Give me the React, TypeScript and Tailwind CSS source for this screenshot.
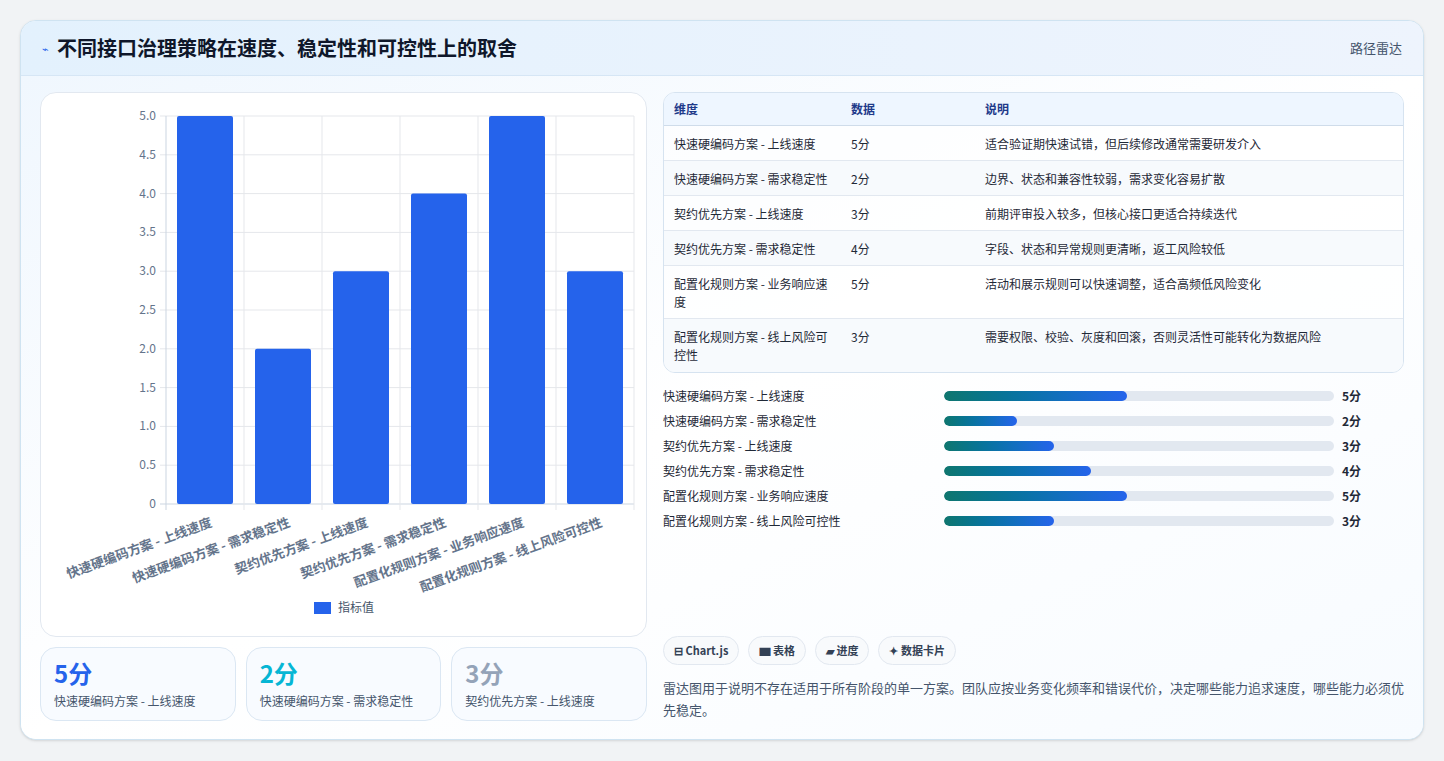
const font = { fontFamily: '"Noto Sans CJK SC", "Noto Sans", sans-serif' };
const cats = [
  ["快速硬编码方案 - 上线速度", 5],
  ["快速硬编码方案 - 需求稳定性", 2],
  ["契约优先方案 - 上线速度", 3],
  ["契约优先方案 - 需求稳定性", 4],
  ["配置化规则方案 - 业务响应速度", 5],
  ["配置化规则方案 - 线上风险可控性", 3],
] as const;
const rows = [
  ["快速硬编码方案 - 上线速度", "5分", "适合验证期快速试错，但后续修改通常需要研发介入", 35],
  ["快速硬编码方案 - 需求稳定性", "2分", "边界、状态和兼容性较弱，需求变化容易扩散", 35],
  ["契约优先方案 - 上线速度", "3分", "前期评审投入较多，但核心接口更适合持续迭代", 35],
  ["契约优先方案 - 需求稳定性", "4分", "字段、状态和异常规则更清晰，返工风险较低", 35],
  ["配置化规则方案 - 业务响应速度", "5分", "活动和展示规则可以快速调整，适合高频低风险变化", 53],
  ["配置化规则方案 - 线上风险可控性", "3分", "需要权限、校验、灰度和回滚，否则灵活性可能转化为数据风险", 53],
] as const;

function Chart() {
  const x0 = 125, x1 = 593, y0 = 23, y1 = 411;
  const cw = (x1 - x0) / 6;
  const ys = [0, 0.5, 1, 1.5, 2, 2.5, 3, 3.5, 4, 4.5, 5];
  const yOf = (v: number) => y1 - (v / 5) * (y1 - y0);
  return (
    <svg width="596" height="544" style={font}>
      {ys.map((v) => (
        <g key={v}>
          <line x1={x0 - 6} x2={x1} y1={yOf(v)} y2={yOf(v)} stroke={v === 0 ? "#cbd5e1" : "#e5e7eb"} />
          <text x={x0 - 10} y={yOf(v) + 4} textAnchor="end" fontSize="12" fill="#64748b">{v === 0 ? "0" : v.toFixed(1)}</text>
        </g>
      ))}
      {Array.from({ length: 7 }).map((_, i) => (
        <line key={i} x1={x0 + i * cw} x2={x0 + i * cw} y1={y0} y2={y1 + 6} stroke={i === 0 ? "#cbd5e1" : "#e5e7eb"} />
      ))}
      {cats.map(([l, v], i) => {
        const cx = x0 + i * cw + cw / 2;
        return (
          <g key={i}>
            <rect x={cx - 28} y={yOf(v)} width="56" height={y1 - yOf(v)} fill="#2563eb" rx="2" />
            <text transform={`translate(${cx + 8},${y1 + 22}) rotate(-20)`} textAnchor="end" fontSize="13" fontWeight="600" fill="#64748b">{l}</text>
          </g>
        );
      })}
      <rect x="273" y="509" width="17" height="12" fill="#2563eb" />
      <text x="297" y="519" fontSize="12" fill="#475569">指标值</text>
    </svg>
  );
}

export default function App() {
  return (
    <div className="min-h-[761px] bg-[#f1f3f5] pt-5 px-5 pb-[21px]" style={font}>
      <div className="rounded-2xl border border-[#cfe3f1] bg-white overflow-hidden shadow-sm">
        <div className="h-[55px] flex items-center justify-between px-[21px] border-b border-[#d6e6f5] bg-gradient-to-r from-[#e3f1fd] to-[#eef4fd]">
          <div className="flex items-center gap-2">
            <span className="text-[#2563eb] text-[11px]">⌁</span>
            <h1 className="text-[20px] font-bold text-[#0f172a]">不同接口治理策略在速度、稳定性和可控性上的取舍</h1>
          </div>
          <span className="text-[13px] text-slate-600">路径雷达</span>
        </div>
        <div className="flex gap-4 px-[19px] pt-[16px] pb-[18px] bg-gradient-to-br from-[#f0f7fe] via-white to-[#f7fbff]">
          <div className="w-[607px] flex flex-col gap-[10px]">
            <div className="h-[545px] rounded-2xl border border-[#e2e8f0] bg-white"><Chart /></div>
            <div className="grid grid-cols-3 gap-[10px]">
              {[["5分", "text-[#2563eb]", "快速硬编码方案 - 上线速度"], ["2分", "text-[#06b6d4]", "快速硬编码方案 - 需求稳定性"], ["3分", "text-[#94a3b8]", "契约优先方案 - 上线速度"]].map(([v, c, l]) => (
                <div key={l} className="h-[74px] rounded-2xl border border-[#dbe7f3] bg-[#f8fbff] px-[13px] pt-[10px]">
                  <div className={`text-[24px] font-bold leading-[30px] ${c}`}>{v}</div>
                  <div className="text-[12px] text-slate-600 mt-[4px]">{l}</div>
                </div>
              ))}
            </div>
          </div>
          <div className="flex-1 flex flex-col">
            <div className="rounded-xl border border-[#d6e3f0] overflow-hidden bg-white/60">
              <div className="h-[33px] flex items-center text-[12px] font-semibold text-[#1e3a8a] bg-[#eef6ff] border-b border-[#cfdcea]">
                <div className="w-[187px] pl-[10px]">维度</div>
                <div className="w-[134px] pl-[0px]">数据</div>
                <div className="flex-1">说明</div>
              </div>
              {rows.map(([a, b, c, h], i) => (
                <div key={i} className={`flex text-[12px] text-[#1f2937] leading-[18px] pt-[9px] ${i < 5 ? "border-b border-[#e2e8f0]" : ""} ${i % 2 ? "bg-[#f7fafd]" : ""}`} style={{ height: h }}>
                  <div className="w-[187px] pl-[10px] pr-3">{a}</div>
                  <div className="w-[134px]">{b}</div>
                  <div className="flex-1">{c}</div>
                </div>
              ))}
            </div>
            <div className="mt-[10px] flex flex-col">
              {cats.map(([l, v]) => (
                <div key={l} className="h-[25px] flex items-center text-[12px] text-[#1f2937]">
                  <div className="w-[281px]">{l}</div>
                  <div className="w-[390px] h-[10px] rounded-full bg-[#e2e8f0] overflow-hidden">
                    <div className="h-full rounded-full bg-gradient-to-r from-[#0f766e] to-[#2563eb]" style={{ width: `${v * 9.4}%` }} />
                  </div>
                  <div className="ml-[8px] font-bold">{v}分</div>
                </div>
              ))}
            </div>
            <div className="flex-1" />
            <div className="flex gap-[9px] mb-[12px]">
              {["⊟ Chart.js", "▆ 表格", "▰ 进度", "✦ 数据卡片"].map((t) => (
                <span key={t} className="h-[29px] px-[10px] flex items-center rounded-full border border-[#e2e8f0] bg-[#f8fafc] text-[11px] font-semibold text-[#334155]">{t}</span>
              ))}
            </div>
            <p className="text-[13px] leading-[22px] text-slate-600">雷达图用于说明不存在适用于所有阶段的单一方案。团队应按业务变化频率和错误代价，决定哪些能力追求速度，哪些能力必须优先稳定。</p>
          </div>
        </div>
      </div>
    </div>
  );
}
